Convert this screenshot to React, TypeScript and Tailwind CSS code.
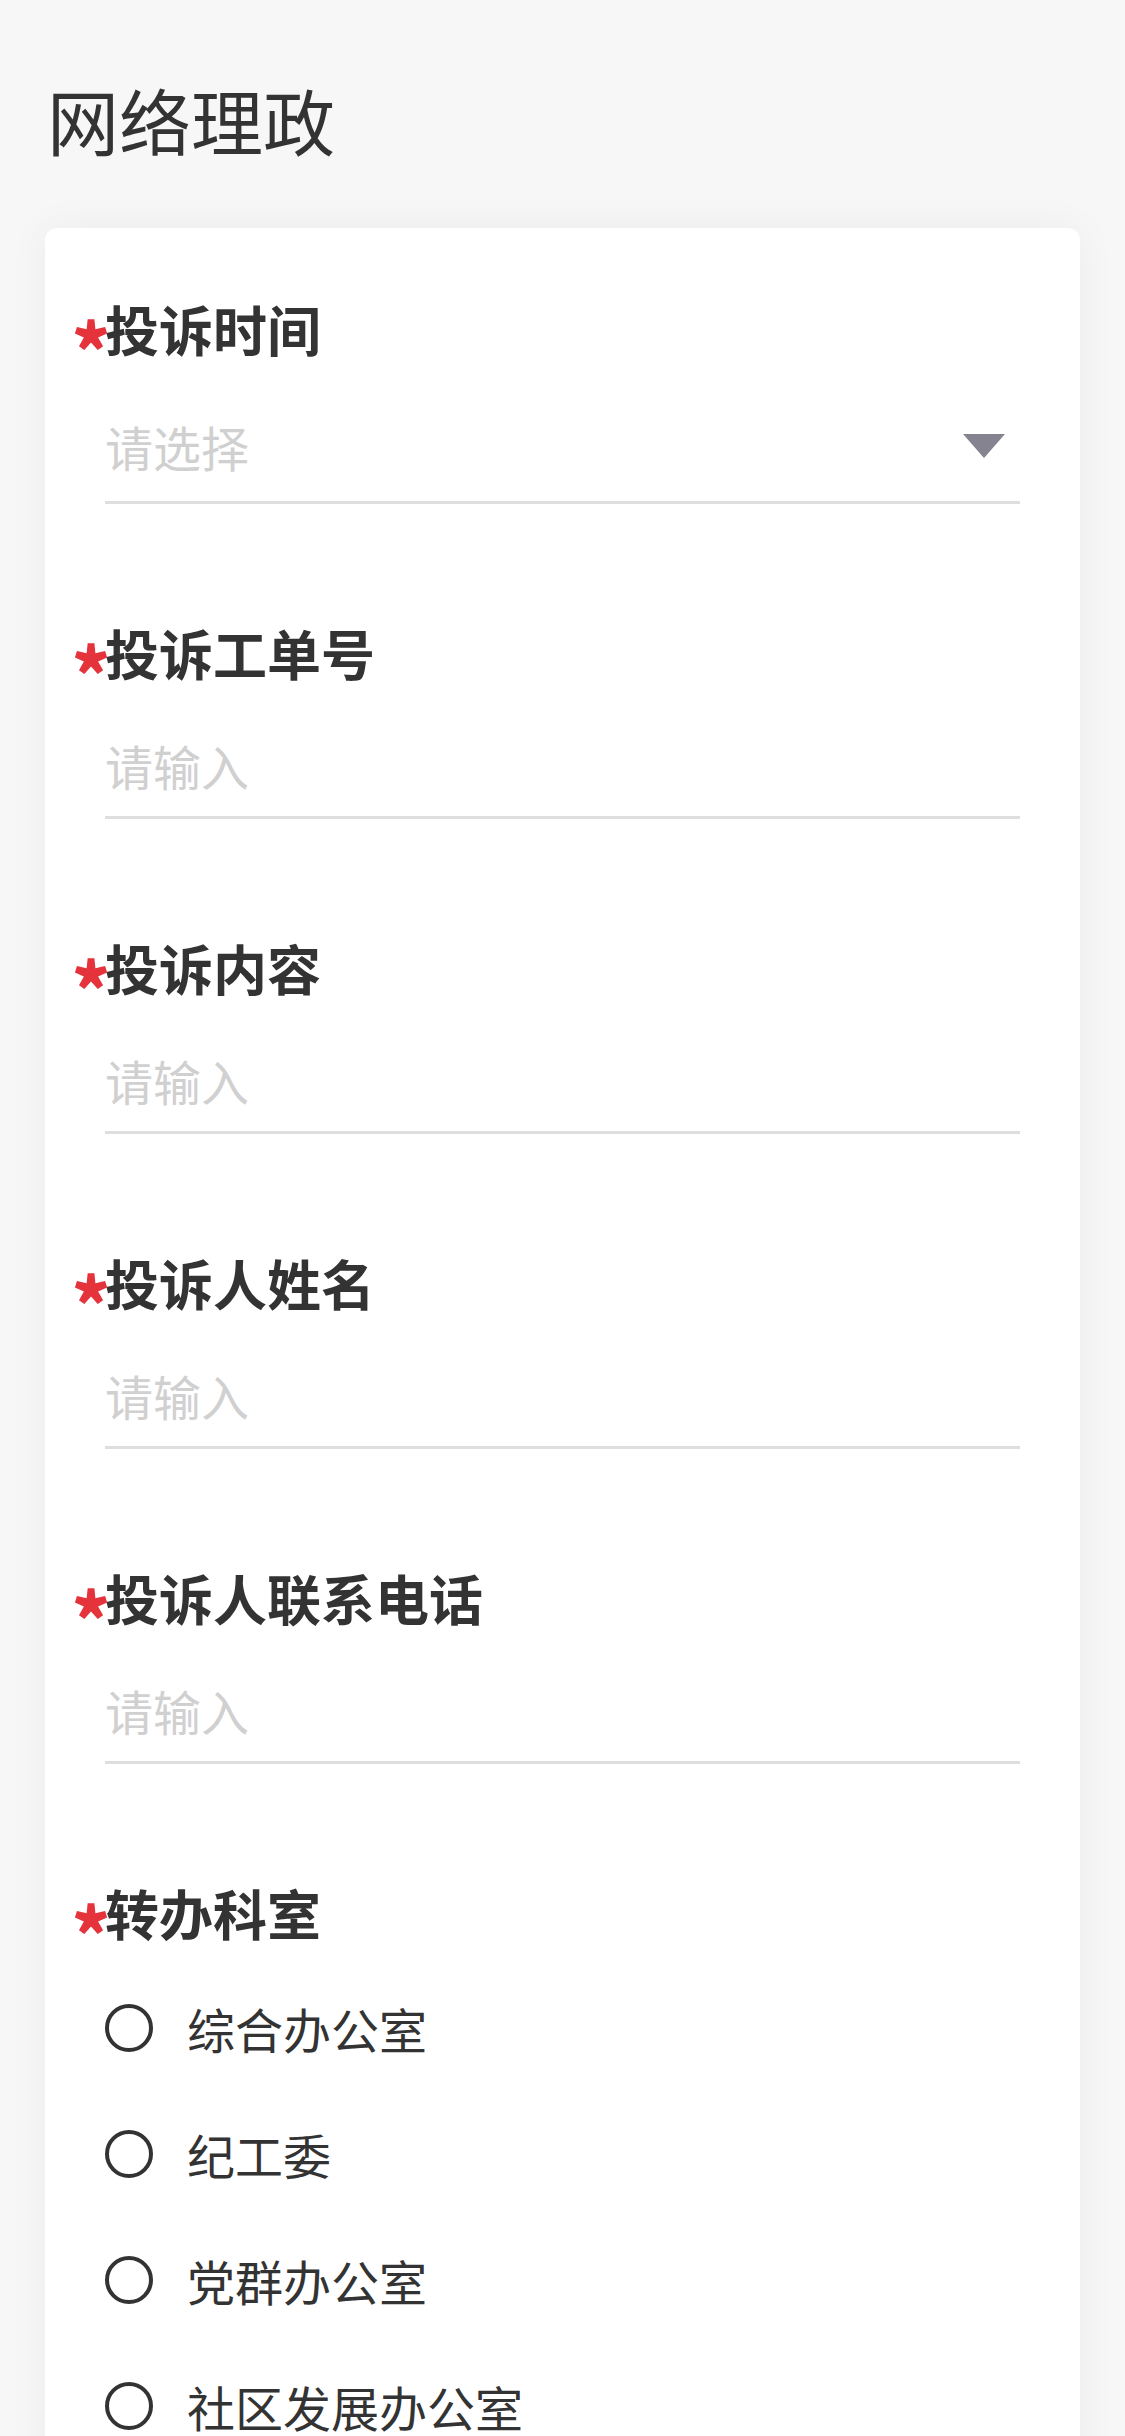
import { useState } from "react";

type Field = {
  key: string;
  label: string;
  kind: "select" | "input";
};

const fields: Field[] = [
  { key: "time", label: "投诉时间", kind: "select" },
  { key: "order", label: "投诉工单号", kind: "input" },
  { key: "content", label: "投诉内容", kind: "input" },
  { key: "name", label: "投诉人姓名", kind: "input" },
  { key: "phone", label: "投诉人联系电话", kind: "input" },
];

const departments = ["综合办公室", "纪工委", "党群办公室", "社区发展办公室"];

const FieldLabel = ({ text }: { text: string }) => {
  return (
    <div className="flex h-[76px] items-center text-[54px] leading-[76px] font-bold text-[#333]">
      <span className="relative top-[18px] -ml-[33px] w-[33px] text-[72px] leading-[76px] font-black text-[#e5333c]">
        *
      </span>
      <span>{text}</span>
    </div>
  );
};

export default function App() {
  const [values, setValues] = useState<Record<string, string>>({});
  const [department, setDepartment] = useState<string | null>(null);

  return (
    <div className="min-h-screen bg-[#f7f7f7] pt-[69px] font-['Noto_Sans_CJK_SC','Noto_Sans',sans-serif] text-[#333]">
      <h1 className="h-[100px] pl-[47px] text-[72px] leading-[100px] font-normal">
        网络理政
      </h1>

      <div className="mx-[45px] mt-[59px] rounded-[12px] bg-white px-[60px] pt-[63px] pb-[60px] shadow-[0_0_40px_rgba(0,0,0,0.05)]">
        {fields.map((field) => {
          return (
            <div className="mb-[111px]" key={field.key}>
              <FieldLabel text={field.label} />
              {field.kind === "select" ? (
                <div className="mt-[43px] flex items-center justify-between border-b-[3px] border-[#dedede] pb-[19px]">
                  <span className="h-[72px] text-[48px] leading-[72px] text-[#d0d0d0]">
                    请选择
                  </span>
                  <svg
                    className="mr-[15px]"
                    height="24"
                    viewBox="0 0 42 24"
                    width="42"
                  >
                    <path d="M0 0 H42 L21 24 Z" fill="#85838f" />
                  </svg>
                </div>
              ) : (
                <div className="mt-[38px] border-b-[3px] border-[#dedede] pb-[15px]">
                  <input
                    className="block h-[72px] w-full bg-transparent text-[48px] leading-[72px] text-[#333] outline-none placeholder:text-[#d0d0d0]"
                    onChange={(event) => {
                      setValues((previous) => {
                        return { ...previous, [field.key]: event.target.value };
                      });
                    }}
                    placeholder="请输入"
                    value={values[field.key] ?? ""}
                  />
                </div>
              )}
            </div>
          );
        })}

        <div>
          <FieldLabel text="转办科室" />
          <div className="mt-[14px] flex flex-col">
            {departments.map((name) => {
              const checked = department === name;
              return (
                <button
                  className="flex h-[126px] items-center gap-[34px] text-left"
                  key={name}
                  onClick={() => {
                    setDepartment(name);
                  }}
                  type="button"
                >
                  <span className="flex size-[48px] items-center justify-center rounded-full border-[4.5px] border-[#333]">
                    {checked && (
                      <span className="size-[22px] rounded-full bg-[#333]" />
                    )}
                  </span>
                  <span className="text-[48px] leading-[72px] text-[#333]">
                    {name}
                  </span>
                </button>
              );
            })}
          </div>
        </div>
      </div>
    </div>
  );
}
